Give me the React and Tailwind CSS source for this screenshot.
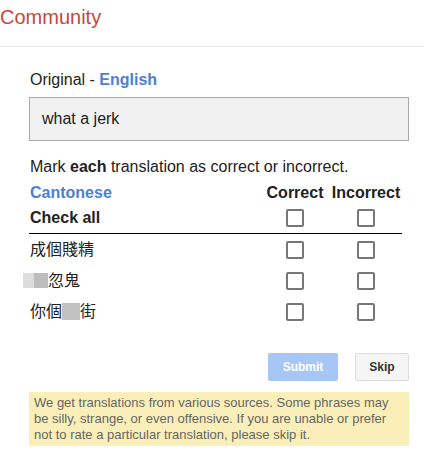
const rows = [
  { id: "r1", text: <>成個賤精</> },
  {
    id: "r2",
    text: (
      <span className="flex items-center -ml-[7px]">
        <span className="inline-block w-[11px] h-[15px] bg-[#dcdcdc]" />
        <span className="inline-block w-[14px] h-[15px] bg-[#bdbdbd]" />
        忽鬼
      </span>
    ),
  },
  {
    id: "r3",
    text: (
      <span className="flex items-center">
        你個
        <span className="inline-block w-[18px] h-[17px] bg-[#c2c2c2]" />
        街
      </span>
    ),
  },
];

const Box = () => (
  <span className="inline-block w-[18px] h-[18px] border-2 border-[#777] rounded-[2px] bg-white" />
);

export default function App() {
  return (
    <div className="w-[424px] h-[459px] bg-white font-['Liberation_Sans','Noto_Sans_CJK_TC',sans-serif] text-[#222] overflow-hidden">
      <div className="h-[47px] border-b border-[#e5e5e5] pt-[5px]">
        <h1 className="text-[20px] leading-[24px] text-[#c8463c]">Community</h1>
      </div>
      <div className="pl-[29px] pr-[15px]">
        <p className="mt-[24px] text-[16px] leading-[18px] pl-[1px]">
          Original - <span className="font-bold text-[#4a81d6]">English</span>
        </p>
        <div className="mt-[8px] h-[44px] border border-[#a9a9a9] bg-[#f1f1f1] flex items-center px-[12px] text-[16px]">
          what a jerk
        </div>
        <p className="mt-[17px] text-[16px] leading-[18px] pl-[1px]">
          Mark <b>each</b> translation as correct or incorrect.
        </p>
        <div className="w-[373px] mt-[5px]">
          <div className="grid grid-cols-[1fr_70px_72px] items-center h-[20px] text-[16px] font-bold">
            <span className="text-[#4a81d6] pl-[1px]">Cantonese</span>
            <span className="text-center">Correct</span>
            <span className="text-center">Incorrect</span>
          </div>
          <div className="grid grid-cols-[1fr_70px_72px] items-center h-[33px] pt-[2px] border-b border-black text-[16px] font-bold">
            <span className="pl-[1px]">Check all</span>
            <span className="flex justify-center"><Box /></span>
            <span className="flex justify-center"><Box /></span>
          </div>
          {rows.map((r) => (
            <div key={r.id} className="grid grid-cols-[1fr_70px_72px] items-center h-[31px] text-[16px] first-of-type:mt-[3px]">
              <span className="pl-[1px]">{r.text}</span>
              <span className="flex justify-center"><Box /></span>
              <span className="flex justify-center"><Box /></span>
            </div>
          ))}
        </div>
        <div className="mt-[26px] flex justify-end gap-[17px]">
          <button className="w-[70px] h-[28px] rounded-[2px] bg-[#a6c6f5] text-white text-[12px] font-bold">
            Submit
          </button>
          <button className="w-[54px] h-[28px] rounded-[2px] border border-[#dcdcdc] bg-[#f5f5f5] text-[#333] text-[12px] font-bold">
            Skip
          </button>
        </div>
        <div className="mt-[11px] h-[54px] bg-[#fbefb9] px-[5px] py-[3px] text-[13px] leading-[16px] text-[#666]">
          We get translations from various sources. Some phrases may be silly, strange, or even offensive. If you are unable or prefer not to rate a particular translation, please skip it.
        </div>
      </div>
    </div>
  );
}
